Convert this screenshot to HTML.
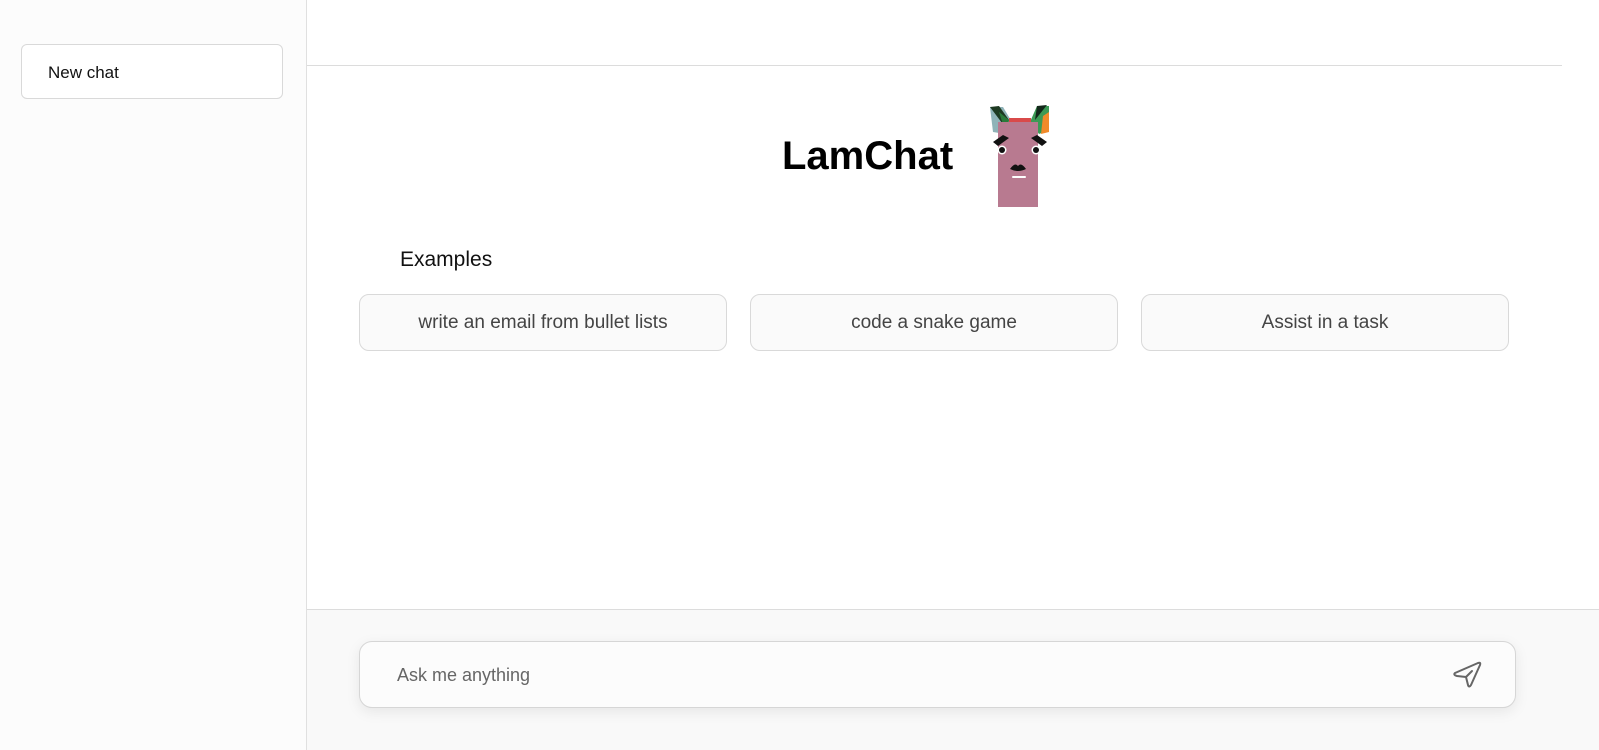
<!DOCTYPE html>
<html><head><style>
*{box-sizing:border-box;margin:0;padding:0}
body{width:1599px;height:750px;background:#fff;font-family:"Liberation Sans",sans-serif;position:relative;overflow:hidden}
.side{position:absolute;left:0;top:0;width:307px;height:750px;background:#fcfcfc;border-right:1px solid #e0e0e0}
.nc{position:absolute;left:21px;top:44px;width:262px;height:55px;border:1px solid #d9d9d9;border-radius:6px;background:#fff;font-size:17px;color:#111;padding:18px 0 0 26px}
.hdr{position:absolute;left:307px;top:0;width:1255px;height:66px;border-bottom:1px solid #dcdcdc}
.title{position:absolute;left:782px;top:134px;font-size:40px;font-weight:bold;color:#000}
.ex{position:absolute;left:400px;top:248px;font-size:21px;color:#111}
.card{position:absolute;top:294px;width:368px;height:57px;border:1px solid #d9d9d9;border-radius:10px;background:#fafafa;font-size:19px;color:#444;text-align:center;line-height:55px}
.bot{position:absolute;left:307px;top:609px;width:1292px;height:141px;background:#f9f9f9;border-top:1px solid #dcdcdc}
.inp{position:absolute;left:359px;top:641px;width:1157px;height:67px;border:1px solid #d6d6d6;border-radius:13px;background:#fcfcfc;box-shadow:0 4px 14px rgba(0,0,0,.08);font-size:18px;color:#666;padding:23px 0 0 37px}
</style></head><body>
<div class="side"><div class="nc">New chat</div></div>
<div class="hdr"></div>
<div class="title">LamChat</div>
<svg style="position:absolute;left:985px;top:102px" width="70" height="110" viewBox="0 0 70 110">
<polygon points="5,5 18,5 27,20 20,32 8,30" fill="#8fb3b8"/>
<polygon points="5,5 14,4 24,18 20,25" fill="#1d3a22"/>
<polygon points="14,10 24,18 21,32" fill="#2a7a3a"/>
<polygon points="52,4 64,4 64,28 54,32 45,20" fill="#3c9a55"/>
<polygon points="52,4 62,3 50,18" fill="#13281a"/>
<polygon points="58,14 64,10 64,30 56,32" fill="#f08a2a"/>
<rect x="24" y="16" width="22" height="8" fill="#d94a4a"/>
<rect x="13" y="20" width="40" height="85" fill="#b87a90"/>
<polygon points="8,40 18,33 24,36 13,44" fill="#111"/>
<polygon points="62,40 52,33 46,36 57,44" fill="#111"/>
<circle cx="17" cy="48" r="4.5" fill="#fff"/><circle cx="17" cy="48" r="3" fill="#111"/>
<circle cx="51" cy="48" r="4.5" fill="#fff"/><circle cx="51" cy="48" r="3" fill="#111"/>
<path d="M25,67 Q30,60 33,64 Q36,60 41,67 Q33,71 25,67Z" fill="#111"/>
<rect x="27" y="74" width="14" height="2" rx="1" fill="#fff"/>
</svg>
<div class="ex">Examples</div>
<div class="card" style="left:359px">write an email from bullet lists</div>
<div class="card" style="left:750px">code a snake game</div>
<div class="card" style="left:1141px">Assist in a task</div>
<div class="bot"></div>
<div class="inp">Ask me anything</div>
<svg style="position:absolute;left:1450px;top:658px" width="34" height="32" viewBox="0 0 34 32">
<path d="M5,15 L28,5 Q31,4 30,7 L21,27 Q19,30 18,27 L16,19 L7,18 Q3,17 5,15Z M16,19 L22,13" fill="none" stroke="#666" stroke-width="2" stroke-linejoin="round" stroke-linecap="round"/>
</svg>
</body></html>
